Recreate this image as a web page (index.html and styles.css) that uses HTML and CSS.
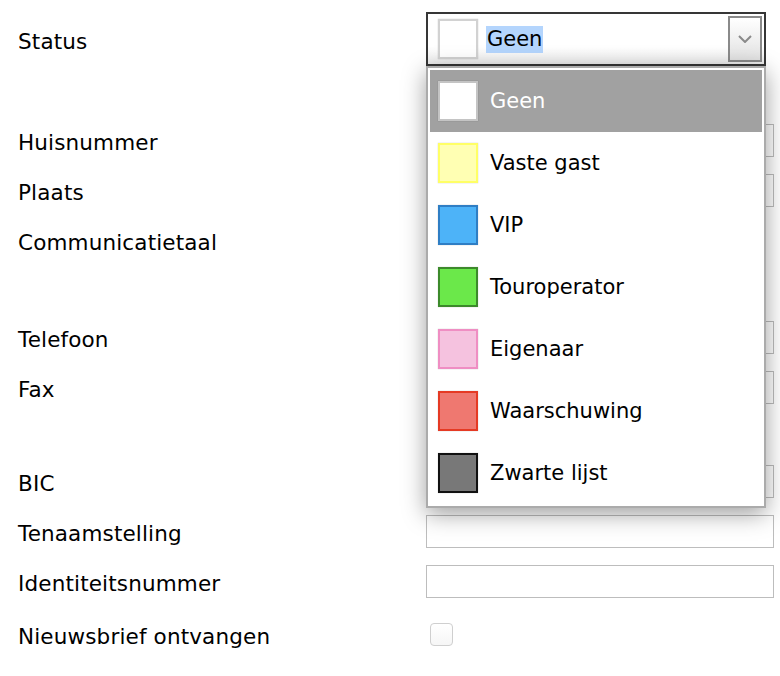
FILE: index.html
```html
<!DOCTYPE html>
<html lang="nl">
<head>
    <meta charset="UTF-8">
    <meta name="viewport" content="width=device-width, initial-scale=1.0">
    <title>Gastgegevens</title>
    <link rel="stylesheet" href="styles.css">
</head>
<body>
    <div class="form">
        <div class="section">
            <div class="row row-status">
                <label class="label">Status</label>
                <div class="field">
                    <div class="combo">
                        <div class="combo-box">
                            <span class="swatch swatch-none"></span>
                            <span class="combo-value">Geen</span>
                            <span class="combo-button">
                                <svg width="14" height="8" viewBox="0 0 14 8"><polyline points="1,1 7,7 13,1" fill="none" stroke="#8a8a8a" stroke-width="2"/></svg>
                            </span>
                        </div>
                        <ul class="combo-list">
                            <li class="option selected"><span class="swatch swatch-none"></span>Geen</li>
                            <li class="option"><span class="swatch swatch-yellow"></span>Vaste gast</li>
                            <li class="option"><span class="swatch swatch-blue"></span>VIP</li>
                            <li class="option"><span class="swatch swatch-green"></span>Touroperator</li>
                            <li class="option"><span class="swatch swatch-pink"></span>Eigenaar</li>
                            <li class="option"><span class="swatch swatch-red"></span>Waarschuwing</li>
                            <li class="option"><span class="swatch swatch-black"></span>Zwarte lijst</li>
                        </ul>
                    </div>
                </div>
            </div>
            <div class="row blank"></div>
            <div class="row">
                <label class="label">Huisnummer</label>
                <div class="field"><input class="input" type="text"></div>
            </div>
            <div class="row">
                <label class="label">Plaats</label>
                <div class="field"><input class="input" type="text"></div>
            </div>
            <div class="row">
                <label class="label">Communicatietaal</label>
                <div class="field"><div class="input short"></div></div>
            </div>
        </div>

        <div class="section section-contact">
            <div class="row">
                <label class="label">Telefoon</label>
                <div class="field"><input class="input" type="text"></div>
            </div>
            <div class="row">
                <label class="label">Fax</label>
                <div class="field"><input class="input" type="text"></div>
            </div>
        </div>

        <div class="section section-bank">
            <div class="row">
                <label class="label">BIC</label>
                <div class="field"><input class="input" type="text"></div>
            </div>
            <div class="row">
                <label class="label">Tenaamstelling</label>
                <div class="field"><input class="input" type="text"></div>
            </div>
            <div class="row">
                <label class="label">Identiteitsnummer</label>
                <div class="field"><input class="input" type="text"></div>
            </div>
            <div class="row row-check">
                <label class="label">Nieuwsbrief ontvangen</label>
                <div class="field"><span class="checkbox"></span></div>
            </div>
        </div>
    </div>
</body>
</html>
```

FILE: styles.css
```css
body {
    margin: 0;
    background-color: #fff;
    color: #000;
    font-family: "DejaVu Sans", Verdana, sans-serif;
    font-size: 21px;
}
.form {
    padding: 12px 6px 0 18px;
}
.section-contact {
    margin-top: 47px;
}
.section-bank {
    margin-top: 44px;
}
.row {
    display: grid;
    grid-template-columns: 408px 348px;
    align-items: center;
    height: 50px;
}
.row-status {
    height: 54px;
}
.row.blank {
    height: 49px;
}
.row-check {
    margin-top: 3px;
}
.label {
    padding-top: 5px;
    font-size: 21.5px;
    letter-spacing: 0.15px;
}
.field {
    position: relative;
}
.input {
    display: block;
    width: 348px;
    height: 33px;
    box-sizing: border-box;
    margin: 0;
    border: 1px solid #bdbdbd;
    background-color: #fff;
    font: inherit;
}
.input.short {
    width: 300px;
}
.checkbox {
    display: block;
    width: 23px;
    height: 23px;
    margin-left: 4px;
    box-sizing: border-box;
    border: 1px solid #cfcfcf;
    border-radius: 4px;
    background: linear-gradient(#fff, #f6f6f6);
}

/* open status dropdown */
.combo {
    position: relative;
    width: 340px;
    z-index: 2;
}
.combo-box {
    display: flex;
    align-items: center;
    height: 54px;
    box-sizing: border-box;
    padding: 2px 2px 2px 10px;
    border: 2px solid #363636;
    background: linear-gradient(#fff 65%, #ececec);
}
.combo-value {
    margin-left: 8px;
    padding: 1px 1px 2px 1px;
    background-color: #b4d5fd;
}
.combo-button {
    display: flex;
    align-items: center;
    justify-content: center;
    align-self: stretch;
    width: 34px;
    margin-left: auto;
    box-sizing: border-box;
    border: 2px solid #8a8a8a;
    background: linear-gradient(#fff, #e2e2e2);
}
.combo-list {
    position: absolute;
    top: 100%;
    left: 0;
    width: 340px;
    box-sizing: border-box;
    margin: 0;
    padding: 2px;
    list-style: none;
    border: 2px solid #ababab;
    background-color: #fff;
    box-shadow: 0 6px 22px rgba(0, 0, 0, 0.38);
}
.option {
    display: flex;
    align-items: center;
    gap: 12px;
    height: 62px;
    padding-left: 8px;
}
.option.selected {
    background-color: #a1a1a1;
    color: #fff;
}
.swatch {
    display: block;
    flex: none;
    width: 40px;
    height: 40px;
    box-sizing: border-box;
    border: 2px solid #ccc;
    box-shadow: 0 0 1px rgba(0, 0, 0, 0.25);
}
.swatch-none {
    background-color: #fff;
    border-color: #d2d2d2;
}
.option.selected .swatch-none {
    border-color: #c4c4c4;
}
.swatch-yellow {
    background-color: #ffffb3;
    border-color: #ffff66;
}
.swatch-blue {
    background-color: #4db3f8;
    border-color: #2f7ec4;
}
.swatch-green {
    background-color: #6be84a;
    border-color: #3c8a2b;
}
.swatch-pink {
    background-color: #f5c2df;
    border-color: #ef8ec3;
}
.swatch-red {
    background-color: #ef7870;
    border-color: #e53a24;
}
.swatch-black {
    background-color: #787878;
    border-color: #111;
}
```
